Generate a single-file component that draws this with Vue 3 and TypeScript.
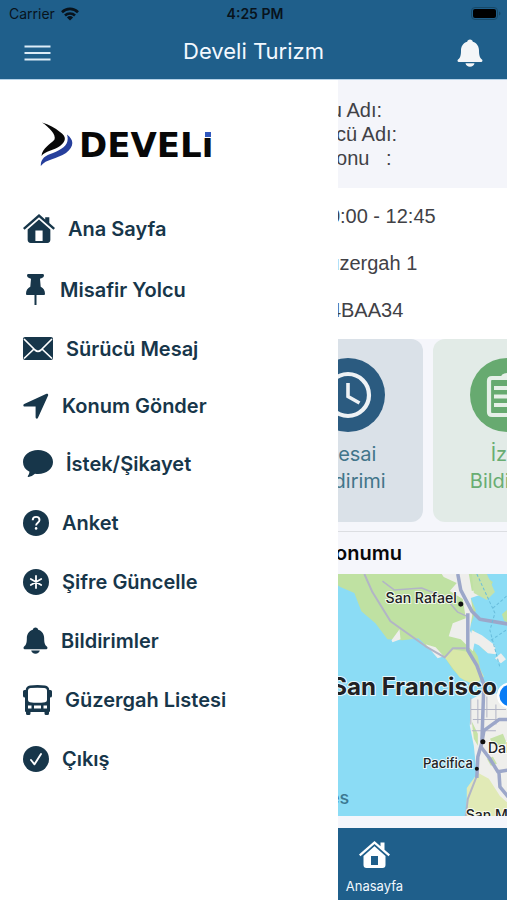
<script setup lang="ts">
type IconName =
  | 'home' | 'pin' | 'mail' | 'location' | 'chat'
  | 'help' | 'asterisk' | 'bell' | 'bus' | 'check'

interface MenuItem {
  icon: IconName
  label: string
  size: 'tall' | 'medium' | 'short'
}

const menu: MenuItem[] = [
  { icon: 'home', label: 'Ana Sayfa', size: 'tall' },
  { icon: 'pin', label: 'Misafir Yolcu', size: 'tall' },
  { icon: 'mail', label: 'Sürücü Mesaj', size: 'short' },
  { icon: 'location', label: 'Konum Gönder', size: 'short' },
  { icon: 'chat', label: 'İstek/Şikayet', size: 'medium' },
  { icon: 'help', label: 'Anket', size: 'medium' },
  { icon: 'asterisk', label: 'Şifre Güncelle', size: 'medium' },
  { icon: 'bell', label: 'Bildirimler', size: 'medium' },
  { icon: 'bus', label: 'Güzergah Listesi', size: 'medium' },
  { icon: 'check', label: 'Çıkış', size: 'medium' },
]
</script>

<template>
  <div class="app">
    <header class="header">
      <div class="status">
        <span class="carrier">
          Carrier
          <svg width="18" height="14" viewBox="0 0 18 14" aria-hidden="true">
            <g fill="none" stroke="#08131c" stroke-width="2.6">
              <path d="M1 5.2a11.4 11.4 0 0 1 16 0" />
              <path d="M4 8.5a7.2 7.2 0 0 1 10 0" />
            </g>
            <path d="M9 13.6 5.9 10.4a4.5 4.5 0 0 1 6.2 0z" fill="#08131c" />
          </svg>
        </span>
        <span class="time">4:25 PM</span>
        <svg class="battery" width="30" height="14" viewBox="0 0 30 14" aria-hidden="true">
          <rect x="0.5" y="0.5" width="26" height="12" rx="3.5" fill="none" stroke="#174968" />
          <rect x="2" y="2" width="23" height="9" rx="2" fill="#000" />
          <path d="M28 4.5c2 .8 2 3.2 0 4z" fill="#174968" />
        </svg>
      </div>
      <div class="bar">
        <button class="icon-button" type="button" aria-label="Menü">
          <svg width="27" height="16" viewBox="0 0 27 16">
            <path d="M0.5 1.5h26M0.5 8h26M0.5 14.5h26" stroke="#dcecf8" stroke-width="1.8" />
          </svg>
        </button>
        <h1>Develi Turizm</h1>
        <button class="icon-button end" type="button" aria-label="Bildirimler">
          <svg width="26" height="28" viewBox="0 0 26 28">
            <path d="M13 0.5c1.6 0 2.6 1 2.8 2.2C20 4 22 7.500 22 11.500c0 5.500 1 7.500 3 9 .9.8.5 2.500-.8 2.500H1.800C.5 23 .1 21.300 1 20.500c2-1.500 3-3.500 3-9C4 7.500 6 4 10.200 2.700 10.400 1.500 11.400.5 13 .5z M8.500 24.300h9c-.4 2-2.200 3.400-4.500 3.400s-4.100-1.400-4.500-3.400z" fill="#f4f6f8" />
          </svg>
        </button>
      </div>
    </header>

    <div class="body">
      <main class="page">
        <section class="driver">
          <p>Yolcu Adı:</p>
          <p>Sürücü Adı:</p>
          <p>Telefonu&nbsp;&nbsp; :</p>
        </section>

        <section class="trip">
          <p>
            <svg width="20" height="20" viewBox="0 0 20 20" aria-hidden="true">
              <circle cx="10" cy="10" r="9" fill="none" stroke="#414146" stroke-width="2" />
              <path d="M10 5v5l4 2" fill="none" stroke="#414146" stroke-width="2" />
            </svg>
            10:00 - 12:45
          </p>
          <p>
            <svg width="15" height="20" viewBox="0 0 15 20" aria-hidden="true">
              <path fill-rule="evenodd" d="M7.500 0C12 0 15 3 15 7.500 15 12 7.500 20 7.500 20S0 12 0 7.500C0 3 3 0 7.500 0z M7.500 5a2.500 2.500 0 1 0 0 5 2.500 2.500 0 0 0 0-5z" fill="#414146" />
            </svg>
            Güzergah 1
          </p>
          <p>
            <svg width="21" height="20" viewBox="0 0 21 20" aria-hidden="true">
              <path d="M4 2h13l3 8v8h-4v-2H5v2H1v-8z" fill="#414146" />
            </svg>
            34BAA34
          </p>
        </section>

        <section class="actions">
          <button class="card blue" type="button">
            <svg width="74" height="74" viewBox="0 0 74 74" aria-hidden="true">
              <circle cx="37" cy="37" r="37" fill="#2b5b80" />
              <circle cx="37" cy="37" r="21" fill="none" stroke="#eef2f5" stroke-width="4.200" />
              <path d="M37 25v13.500l11.500 6.500" fill="none" stroke="#eef2f5" stroke-width="3.600" />
            </svg>
            <span>Mesai<br />Bildirimi</span>
          </button>
          <button class="card green" type="button">
            <svg width="74" height="74" viewBox="0 0 74 74" aria-hidden="true">
              <circle cx="37" cy="37" r="37" fill="#67aa70" />
              <path d="M22 20h30q3 0 3 3v31q0 3-3 3H22q-3 0-3-3V23q0-3 3-3z" fill="none" stroke="#e6f0e8" stroke-width="4.200" />
              <path d="M30 21q1-6 7-6t7 6z" fill="#e6f0e8" />
              <path d="M24 30h26M24 38.500h26M24 47h26" stroke="#e6f0e8" stroke-width="3.800" />
            </svg>
            <span>İzin<br />Bildirimi</span>
          </button>
        </section>

        <section class="location">
          <h2>Servis Konumu</h2>
          <svg class="map" viewBox="273 574 234 241" preserveAspectRatio="xMinYMin slice" role="img" aria-label="Harita">
            <rect x="273" y="574" width="900" height="600" fill="#8bdcf5" />
            <path d="M320 574 339 587 353 593 360 611 374 623 386 639 401 640 417 638 428 649 443 657 451 669 462 680 474 681 479 671 476 656 469 645 471 629 480 642 493 646 493 653 482 650 475 640 467 630 474 610 468 596 487 590 491 582 480 574z" fill="#bfe1a2" />
            <path d="M440 574h27l3 17 16-4-8 8-9 3 2 13-3 19 5 11-2 10-12-12-12-3 4-13 13-5-3-19-13-8 7-8-13-6z M390 640l8-11 1 10-8 3z M424 644l10 3 8 9-6 2z M470 630l10 5 13 10 1 9-8-1-9-8-9-4z M493 658l6-5 5 6-5 4z" fill="#eeeeec" />
            <path d="M443 657l7-8 19 3 8 14 5 10-9 9-15-8z" fill="#d9e8a8" />
            <path d="M500 614l7-6v16l-5-4z" fill="#bfe1a2" />
            <path d="M470 574l15 0 8 18-8 8-13-7z" fill="#c5e2aa" />
            <path d="M469 699 480 693H700V815H464L466 790 475 775 472 745 468 725z" fill="#efefec" />
            <path d="M465 787 476 772 487 778 498 795 507 803V815H465z" fill="#e1eab6" />
            <path d="M470 721l6 12 0 12-4-7z M488 738l13-5 4 10-12 3z M485 758l6-2 4 7-6 2z" fill="#c6e2a7" />
            <g fill="none" stroke="#b2b5c6" stroke-linejoin="round">
              <path d="M363 574 371 592 389 621 424 646 443 657 451 648 464 648" stroke-width="2" />
              <path d="M381 581 393 590 420 588 443 597 456 612 467 617" stroke-width="1.500" />
              <path d="M469 697V724M476 699v24M485 696v21M494 704v20M469 709h35M471 719h34M470 730h24" stroke-width="1" />
              <path d="M475 775 466 798 464 815" stroke-width="2" />
            </g>
            <g fill="none" stroke="#9ca7c9" stroke-width="3.500" stroke-linejoin="round">
              <path d="M456 574 459 590 470 611 478 619 507 624" />
              <path d="M466 613V650L475 665 482 684 480 742 476 756 475 777" />
              <path d="M480 742 482 730 497 719 507 719M479 746 488 758 496 771 507 769M497 771 498 786 507 797" />
            </g>
            <path d="M475 574 493 613 488 630 498 667 M491 608 507 594 M489 640 507 628" fill="none" stroke="#68bddc" stroke-width="1" stroke-dasharray="3 2" />
            <circle cx="459" cy="604" r="2.500" fill="#111" />
            <circle cx="481" cy="741" r="2.500" fill="#111" />
            <circle cx="475" cy="768" r="2" fill="#111" />
            <g class="labels">
              <text class="town large" x="455" y="603" text-anchor="end">San Rafael</text>
              <text class="city" x="495" y="695" text-anchor="end">San Francisco</text>
              <text class="town" x="471" y="767" text-anchor="end">Pacifica</text>
              <text class="town large" x="486" y="752">Daly City</text>
              <text class="town large" x="464" y="819">San Mateo</text>
            </g>
            <text class="sea" x="348" y="803" text-anchor="end">Farallones</text>
            <circle cx="508" cy="695" r="13" fill="#fff" />
            <circle cx="508" cy="695" r="10.500" fill="#087cf5" />
          </svg>
        </section>

        <nav class="tabs">
          <a href="#">
            <svg width="31" height="27" viewBox="0 0 31 27" aria-hidden="true">
              <path d="M0 13.500 15.500 0l6 5.200V1.500h4v7.200l5.500 4.800-1.500 1.800L15.500 3 1.500 15.300z" fill="#fff" />
              <path fill-rule="evenodd" d="M4.500 15 15.500 5.200 26.500 15v9q0 3-3 3h-16q-3 0-3-3z M12 15v9h7v-9z" fill="#fff" />
            </svg>
            Anasayfa
          </a>
        </nav>
      </main>

      <aside class="drawer">
        <div class="logo">
          <svg width="34" height="45" viewBox="0 0 34 45" aria-hidden="true">
            <path d="M2 0.500C9 2.500 15 6 20 10c7 5 6 9 0 14C14 28.500 5 29 1.500 34 2 26 11 22 14.500 17.500 16.500 13 9 5 2 .5z" fill="#080808" />
            <path d="M27 12.500C34.500 18 34 25 26 31 17 37 6 37 .8 44 .5 37 5 33.500 13 31 23 27 30 22 27 12.500z" fill="#263f9c" />
          </svg>
          <span class="wordmark">DEVEL<span class="dotted">ı</span></span>
        </div>
        <ul class="menu">
          <li v-for="item in menu" :key="item.label">
            <a href="#" :class="item.size">
              <svg v-if="item.icon === 'home'" width="32" height="29" viewBox="0 0 31 28">
                <path d="M0 13.500 15.500 0l6 5.200V3h4v5.700l5.500 4.800-1.500 1.800L15.500 3 1.500 15.300z" />
                <path fill-rule="evenodd" d="M4.500 15 15.500 5.200 26.500 15v10q0 3-3 3h-16q-3 0-3-3z M12 16v10h7V16z" />
              </svg>
              <svg v-else-if="item.icon === 'pin'" width="24" height="31" viewBox="0 0 24 31">
                <path d="M5 0h15q1 0 1 1.500T19 4l-2 .8.700 8C20.500 14 22 16.500 22 20q0 1-1 1H4q-1 0-1-1c0-3.500 1.500-6 4.300-7.200L8 4.800 6 4Q4 3 4 1.500T5 0z M11.500 21h2v10h-2z" />
              </svg>
              <svg v-else-if="item.icon === 'mail'" width="30" height="23" viewBox="0 0 30 23">
                <rect width="30" height="23" rx="2" />
                <path d="M1 2 12 13q3 2.600 6 0L29 2M1 21.500l10-9.500M29 21.500l-10-9.500" fill="none" stroke="#fff" stroke-width="1.700" />
              </svg>
              <svg v-else-if="item.icon === 'location'" width="26" height="26" viewBox="0 0 26 26">
                <path d="M23.500.8c1-.5 2 .5 1.600 1.600L15 24.800c-.6 1.400-2.400 1-2.400-.5V13.500H1.700c-1.500 0-1.900-1.900-.5-2.500z" />
              </svg>
              <svg v-else-if="item.icon === 'chat'" width="30" height="27" viewBox="0 0 30 27">
                <path d="M15 0c8.500 0 15 5.300 15 12s-6.500 12-15 12q-1.500 0-3-.3Q9 26.500 5.500 27q-1.500 0-.5-1.300 1.300-1.700 1.500-4Q0 18.500 0 12C0 5.300 6.500 0 15 0z" />
              </svg>
              <svg v-else-if="item.icon === 'help'" width="26" height="26" viewBox="0 0 26 26">
                <circle cx="13" cy="13" r="13" />
                <path d="M9.700 10.200C9.700 8 11 6.900 13.100 6.900c2 0 3.400 1.200 3.400 3 0 2.900-3.400 2.700-3.400 5.500" fill="none" stroke="#fff" stroke-width="1.900" />
                <circle cx="13.100" cy="18.400" r="1.300" fill="#fff" />
              </svg>
              <svg v-else-if="item.icon === 'asterisk'" width="26" height="26" viewBox="0 0 26 26">
                <circle cx="13" cy="13" r="13" />
                <path d="M13 7v12M7.800 10l10.400 6M18.200 10 7.800 16" stroke="#fff" stroke-width="1.800" stroke-linecap="round" />
              </svg>
              <svg v-else-if="item.icon === 'bell'" width="25" height="27" viewBox="0 0 26 28">
                <path d="M13 0.500c1.600 0 2.600 1 2.800 2.200C20 4 22 7.500 22 11.500c0 5.500 1 7.500 3 9 .9.800.5 2.500-.8 2.500H1.800C.5 23 .1 21.300 1 20.500c2-1.500 3-3.500 3-9C4 7.500 6 4 10.200 2.700 10.400 1.500 11.400.5 13 .5z M8.500 24.300h9c-.4 2-2.200 3.400-4.500 3.400s-4.100-1.400-4.500-3.400z" />
              </svg>
              <svg v-else-if="item.icon === 'bus'" width="29" height="30" viewBox="0 0 29 30">
                <path fill-rule="evenodd" d="M7 .5Q14.500-.5 22 .5q4 .5 4.300 4.500h1.200q1.500 0 1.500 1.500V11q0 1.500-2 1.500V26q0 1-1 1v1.500q0 1.500-1.500 1.500H23q-1.500 0-1.500-1.500V27h-14v1.500Q7.500 30 6 30H4.500Q3 30 3 28.500V27q-1 0-1-1V12.500Q0 12.500 0 11V6.500Q0 5 1.500 5h1.200Q3 1 7 .5z M7.500 3Q5 3.200 5 5.500V15q0 2 2 2.200 7.500 1 15 0 2-.2 2-2.200V5.500Q24 3.200 21.500 3q-7-.7-14 0z" />
                <path d="M5 20.500h3.500v3H5z M11 20.500h7v3h-7z M20.500 20.500H24v3h-3.500z" fill="#fff" />
              </svg>
              <svg v-else width="26" height="26" viewBox="0 0 26 26">
                <circle cx="13" cy="13" r="13" />
                <path d="m8 14 3.500 4.300L18 8" fill="none" stroke="#fff" stroke-width="1.900" stroke-linecap="round" stroke-linejoin="round" />
              </svg>
              {{ item.label }}
            </a>
          </li>
        </ul>
      </aside>
    </div>
  </div>
</template>

<style>
body {
  margin: 0;
}
</style>

<style scoped>
.app {
  display: flex;
  flex-direction: column;
  min-height: 100vh;
  font-family: Inter, "Liberation Sans", sans-serif;
  background: #fff;
}

h1, h2, p, ul {
  margin: 0;
  padding: 0;
  font-weight: 400;
}

button {
  border: 0;
  padding: 0;
  background: none;
  font: inherit;
}

a {
  color: inherit;
  text-decoration: none;
}

svg {
  flex: none;
}

.header {
  background: #1f5f8b;
  border-bottom: 1px solid #b5d2e8;
}

.status {
  display: grid;
  grid-template-columns: 1fr auto 1fr;
  align-items: center;
  height: 27px;
  padding: 0 6px 0 9px;
  font-size: 14px;
  color: #08131c;
}

.carrier {
  display: flex;
  align-items: center;
  gap: 6px;
}

.time {
  font-weight: 600;
}

.battery {
  justify-self: end;
}

.bar {
  display: grid;
  grid-template-columns: 1fr auto 1fr;
  align-items: center;
  height: 52px;
  padding: 0 24px;
}

.bar h1 {
  font-size: 22px;
  line-height: 48px;
  padding-bottom: 4px;
  color: #f3f9ff;
}

.icon-button {
  display: flex;
  justify-self: start;
}

.icon-button.end {
  justify-self: end;
}

.body {
  position: relative;
  display: flex;
  flex: 1;
}

.page {
  display: flex;
  flex: 1;
  flex-direction: column;
  min-width: 0;
  padding-left: 54%;
  overflow: hidden;
  background: #f5f6fb;
  color: #414146;
}

.driver {
  padding: 18px 20px;
  background: #f4f5fa;
  font: 20px/24px "Liberation Sans", Arial, sans-serif;
}

.trip {
  padding: 5px 16px;
  background: #fff;
  font: 20px/47px "Liberation Sans", Arial, sans-serif;
}

.trip p {
  display: flex;
  align-items: center;
  gap: 8px;
}

.actions {
  display: flex;
  gap: 10px;
  padding-bottom: 9px;
  border-bottom: 1px solid #dcdee2;
}

.card {
  display: flex;
  flex: none;
  flex-direction: column;
  align-items: center;
  gap: 9px;
  width: 149px;
  padding: 19px 0 27px;
  border-radius: 12px;
  font-size: 20px;
  line-height: 27px;
}

.card.blue {
  background: #dae1e8;
  color: #42758a;
}

.card.green {
  background: #e2ebe7;
  color: #69ad73;
}

.location {
  display: flex;
  flex: 1;
  flex-direction: column;
  padding-bottom: 12px;
}

.location h2 {
  font-size: 20px;
  font-weight: 600;
  line-height: 42px;
  padding-left: 12px;
  white-space: nowrap;
  text-indent: -30px;
  color: #08080a;
}

.map {
  display: block;
  flex: 1;
  width: 100%;
  min-height: 0;
}

.labels {
  fill: #202124;
  stroke: #fff;
  stroke-width: 2px;
  stroke-opacity: 0.8;
  paint-order: stroke;
}

.town {
  font-size: 13px;
  font-weight: 500;
}

.town.large {
  font-size: 14px;
}

.city {
  font-size: 24px;
  font-weight: 700;
}

.sea {
  font-size: 18px;
  font-weight: 500;
  fill: #3c7891;
}

.tabs {
  display: flex;
  height: 72px;
  padding-left: 72px;
  background: #1f5f8b;
  color: #f1f8fe;
  font-size: 13px;
}

.tabs a {
  display: flex;
  flex-direction: column;
  align-items: center;
  gap: 10px;
  padding-top: 13px;
}

.drawer {
  position: absolute;
  inset: 0 33.3% 0 0;
  background: #fff;
}

.logo {
  display: flex;
  align-items: center;
  gap: 5px;
  height: 45px;
  padding: 42px 40px 31px;
}

.wordmark {
  font-family: "DejaVu Sans", sans-serif;
  font-size: 34px;
  font-weight: 700;
  color: #080808;
}

.dotted {
  position: relative;
}

.dotted::before {
  content: "";
  position: absolute;
  top: 7px;
  left: 3px;
  width: 6px;
  height: 5px;
  background: #3158bd;
}

.menu {
  list-style: none;
}

.menu a {
  display: flex;
  align-items: center;
  gap: 13px;
  padding-left: 23px;
  font-size: 20px;
  font-weight: 600;
  color: #17364a;
}

.menu svg {
  fill: #17364a;
}

.menu .tall {
  height: 61px;
}

.menu .medium {
  height: 59px;
}

.menu .short {
  height: 57px;
}
</style>
